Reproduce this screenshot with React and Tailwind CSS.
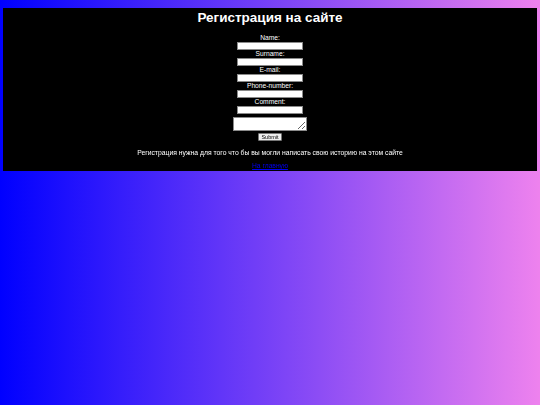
import React from "react";

const fields = ["Name:", "Surname:", "E-mail:", "Phone-number:", "Comment:"];

export default function App() {
  return (
    <div
      className="min-h-screen w-full bg-[linear-gradient(to_right,#0000ff,#ee82ee)] pt-[8px] px-[3px]"
      style={{ fontFamily: '"Liberation Sans", Arial, sans-serif' }}
    >
      <div className="bg-black h-[163px] flex flex-col items-center text-white">
        {/* Title */}
        <h1 className="h-[26px] pt-[1px] leading-[18px] text-[13.5px] font-bold">
          Регистрация на сайте
        </h1>

        {/* Form */}
        <form className="flex flex-col items-center">
          {fields.map((f) => (
            <div key={f} className="flex flex-col items-center">
              <label className="h-[8px] leading-[8px] text-[6.7px]">{f}</label>
              <input
                type="text"
                className="w-[66px] h-[8px] bg-white border-[0.5px] border-[#8a8a8a] outline-none"
              />
            </div>
          ))}
          <textarea className="mt-[3px] w-[74px] h-[14px] bg-white border-[0.5px] border-[#8a8a8a] resize-y outline-none" />
          <button
            type="button"
            className="mt-[2px] w-[24px] h-[8px] bg-[#efefef] border-[0.5px] border-[#767676] rounded-[1px] text-black text-[5.5px] leading-[6px]"
          >
            Submit
          </button>
        </form>

        <p className="mt-[8px] text-[6.8px] leading-[8px]">
          Регистрация нужна для того что бы вы могли написать свою историю на этом сайте
        </p>
        <a href="#" className="mt-[5px] text-[6.7px] leading-[8px] text-[#0000ee] underline">
          На главную
        </a>
      </div>
    </div>
  );
}
